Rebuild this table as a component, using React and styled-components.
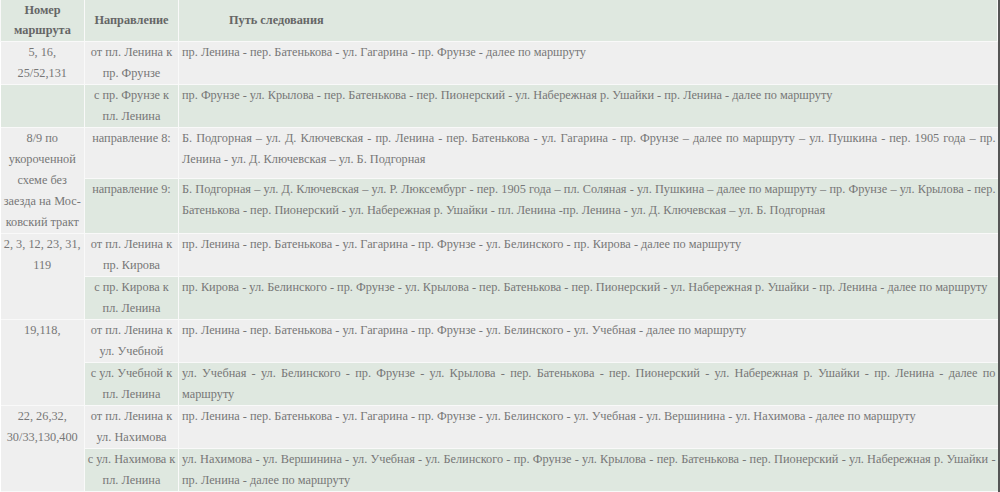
import React from "react";
import styled, { createGlobalStyle } from "styled-components";

const GlobalStyle = createGlobalStyle`
  html, body {
    margin: 0;
    padding: 0;
    background: #ffffff;
  }
`;

const GRAY = "#efefef";
const GREEN = "#dfe8e0";

const Frame = styled.div`
  width: 1000px;
  height: 492px;
  overflow: hidden;
  box-sizing: border-box;
  border-right: 2px solid #555555;
  background: #ffffff;
`;

const Table = styled.table`
  width: 998px;
  border-collapse: collapse;
  table-layout: fixed;
  font-family: "Liberation Serif", "DejaVu Serif", serif;
  font-size: 12.3px;
  line-height: 21px;
  color: #777777;
`;

const Row = styled.tr`
  height: ${({ $h }) => $h}px;
  background: ${({ $tone }) => ($tone === "green" ? GREEN : GRAY)};
`;

const HeadCell = styled.th`
  padding: 0 3px;
  border: 1px solid #f9f9f9;
  border-top: none;
  font-weight: bold;
  color: #666666;
  line-height: 20px;
  text-align: ${({ $align }) => $align || "center"};
  padding-left: ${({ $indent }) => $indent || 3}px;
  vertical-align: middle;
`;

const RouteCell = styled.td`
  padding: 0 1px;
  border: 1px solid #f9f9f9;
  border-left: none;
  text-align: center;
  vertical-align: top;
  white-space: nowrap;
  background: ${({ $tone }) => ($tone === "green" ? GREEN : GRAY)};
`;

const DirCell = styled.td`
  padding: 0 1px;
  border: 1px solid #f9f9f9;
  text-align: center;
  vertical-align: top;
  white-space: nowrap;
`;

const PathCell = styled.td`
  padding: 0 2px 0 3px;
  border: 1px solid #f9f9f9;
  border-right: none;
  vertical-align: top;
`;

const PathLine = styled.span`
  display: block;
  white-space: nowrap;
  text-align: ${({ $full }) => ($full ? "justify" : "left")};
  text-align-last: ${({ $full }) => ($full ? "justify" : "left")};
`;

const lines = (arr) =>
  arr.map((l, i) => (
    <React.Fragment key={i}>
      {i > 0 && <br />}
      {l}
    </React.Fragment>
  ));

const pathLines = (arr) =>
  arr.map((l, i) => (
    <PathLine key={i} $full={i < arr.length - 1}>
      {l}
    </PathLine>
  ));

const groups = [
  {
    route: ["5, 16,", "25/52,131"],
    split: true,
    rows: [
      {
        dir: ["от пл. Ленина к", "пр. Фрунзе"],
        path: ["пр. Ленина - пер. Батенькова - ул. Гагарина - пр. Фрунзе - далее по маршруту"],
        h: 42,
      },
      {
        dir: ["с пр. Фрунзе к", "пл. Ленина"],
        path: [
          "пр. Фрунзе - ул. Крылова - пер. Батенькова - пер. Пионерский - ул. Набережная р. Ушайки - пр. Ленина - далее по маршруту",
        ],
        h: 42,
      },
    ],
  },
  {
    route: ["8/9 по", "укороченной", "схеме без", "заезда на Мос-", "ковский тракт"],
    rows: [
      {
        dir: ["направление 8:"],
        path: [
          "Б. Подгорная – ул. Д. Ключевская - пр. Ленина - пер. Батенькова - ул. Гагарина - пр. Фрунзе – далее по маршруту – ул. Пушкина - пер. 1905 года – пр.",
          "Ленина - ул. Д. Ключевская – ул. Б. Подгорная",
        ],
        h: 50,
      },
      {
        dir: ["направление 9:"],
        path: [
          "Б. Подгорная – ул. Д. Ключевская – ул. Р. Люксембург - пер. 1905 года – пл. Соляная - ул. Пушкина – далее по маршруту – пр. Фрунзе – ул. Крылова - пер.",
          "Батенькова - пер. Пионерский - ул. Набережная р. Ушайки - пл. Ленина -пр. Ленина - ул. Д. Ключевская – ул. Б. Подгорная",
        ],
        h: 52,
      },
    ],
  },
  {
    route: ["2, 3, 12, 23, 31,", "119"],
    rows: [
      {
        dir: ["от пл. Ленина к", "пр. Кирова"],
        path: [
          "пр. Ленина - пер. Батенькова - ул. Гагарина - пр. Фрунзе - ул. Белинского - пр. Кирова - далее по маршруту",
        ],
        h: 42,
      },
      {
        dir: ["с пр. Кирова к", "пл. Ленина"],
        path: [
          "пр. Кирова - ул. Белинского - пр. Фрунзе - ул. Крылова - пер. Батенькова - пер. Пионерский - ул. Набережная р. Ушайки - пр. Ленина - далее по маршруту",
        ],
        h: 42,
      },
    ],
  },
  {
    route: ["19,118,"],
    rows: [
      {
        dir: ["от пл. Ленина к", "ул. Учебной"],
        path: [
          "пр. Ленина - пер. Батенькова - ул. Гагарина - пр. Фрунзе - ул. Белинского - ул. Учебная - далее по маршруту",
        ],
        h: 42,
      },
      {
        dir: ["с ул. Учебной к", "пл. Ленина"],
        path: [
          "ул. Учебная  - ул. Белинского - пр. Фрунзе - ул. Крылова - пер. Батенькова - пер. Пионерский - ул. Набережная р. Ушайки - пр. Ленина - далее по",
          "маршруту",
        ],
        h: 42,
      },
    ],
  },
  {
    route: ["22, 26,32,", "30/33,130,400"],
    rows: [
      {
        dir: ["от пл. Ленина к", "ул. Нахимова"],
        path: [
          "пр. Ленина - пер. Батенькова - ул. Гагарина - пр. Фрунзе - ул. Белинского - ул. Учебная - ул. Вершинина - ул. Нахимова - далее по маршруту",
        ],
        h: 42,
      },
      {
        dir: ["с ул. Нахимова к", "пл. Ленина"],
        path: [
          "ул. Нахимова - ул. Вершинина - ул. Учебная - ул. Белинского - пр. Фрунзе - ул. Крылова - пер. Батенькова - пер. Пионерский - ул. Набережная р. Ушайки -",
          "пр. Ленина - далее по маршруту",
        ],
        h: 42,
      },
    ],
  },
];

export default function App() {
  return (
    <>
      <GlobalStyle />
      <Frame>
        <Table>
          <colgroup>
            <col style={{ width: 84 }} />
            <col style={{ width: 94 }} />
            <col />
          </colgroup>
          <thead>
            <Row $tone="green" $h={41}>
              <HeadCell>
                Номер
                <br />
                маршрута
              </HeadCell>
              <HeadCell>Направление</HeadCell>
              <HeadCell $align="left" $indent={50}>
                Путь следования
              </HeadCell>
            </Row>
          </thead>
          <tbody>
            {groups.map((g, gi) =>
              g.rows.map((r, ri) => {
                const tone = ri === 0 ? "gray" : "green";
                let route = null;
                if (g.split) {
                  route = (
                    <RouteCell $tone={tone}>{ri === 0 ? lines(g.route) : null}</RouteCell>
                  );
                } else if (ri === 0) {
                  route = (
                    <RouteCell $tone="gray" rowSpan={g.rows.length}>
                      {lines(g.route)}
                    </RouteCell>
                  );
                }
                return (
                  <Row key={`${gi}-${ri}`} $tone={tone} $h={r.h}>
                    {route}
                    <DirCell>{lines(r.dir)}</DirCell>
                    <PathCell>{pathLines(r.path)}</PathCell>
                  </Row>
                );
              })
            )}
          </tbody>
        </Table>
      </Frame>
    </>
  );
}
